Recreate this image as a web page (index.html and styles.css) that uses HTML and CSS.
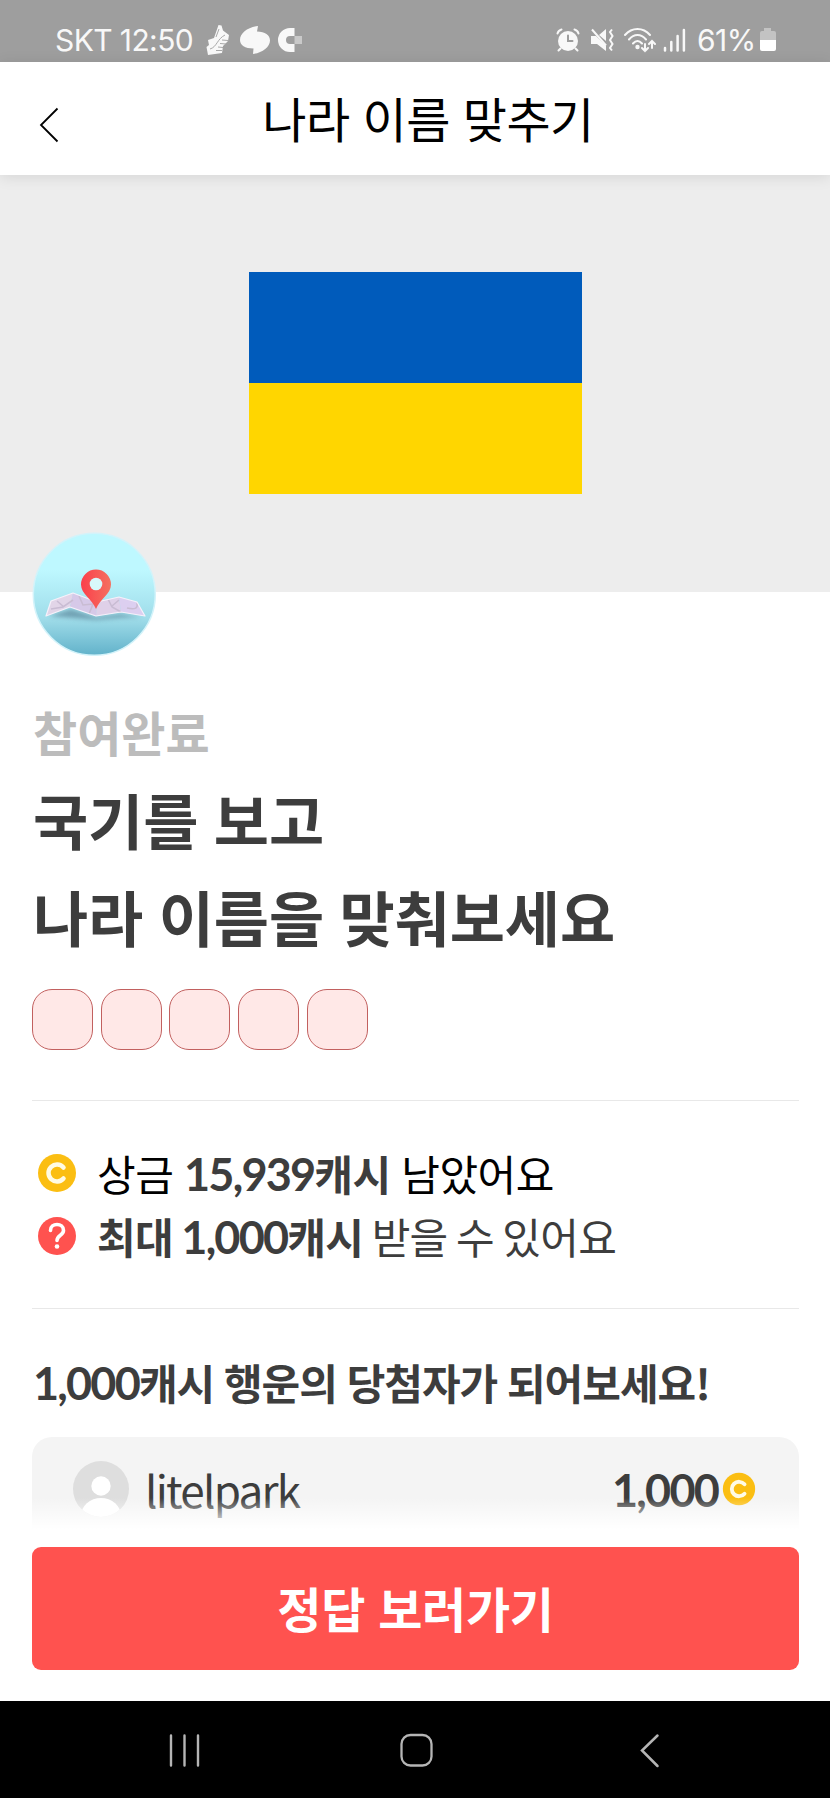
FILE: index.html
```html
<!DOCTYPE html>
<html lang="ko">
<head>
<meta charset="utf-8">
<title>나라 이름 맞추기</title>
<link rel="stylesheet" href="styles.css">
</head>
<body>
<div class="status">
  <div class="status-left">
    <span class="clock">SKT 12:50</span>
    <svg class="shoe" width="26" height="32" viewBox="0 0 26 32"><path d="M13.500 1l3 .5 1.500 5 6 4.500-1 6-5 5-1 7-14 2-1.500-8 2.500-2-1-5 6-2z" fill="#f8f8f8"/><path d="M5 25c7-2 7-10 15-14M11 26.500h6M13 23l5 .5M15 19.500l6 .5M17 16l6 .5M14 5l-3 8" fill="none" stroke="#a8a8a8" stroke-width="1"/></svg>
    <svg class="swirl" width="32" height="30" viewBox="0 0 32 30"><path d="M19 1l-1 5.500c8 0 13 3.500 13 9C31 22 23 28 14 29l.5-5.500C6 23.500 1 20 1 15 1 8 9 2 19 1z" fill="#f8f8f8"/></svg>
    <svg width="26" height="24" viewBox="0 0 26 24"><path d="M16.500 0v8H12a4 4 0 0 0 0 8h4.500v8H12A12 12 0 0 1 12 0z" fill="#f8f8f8"/><path d="M16.500 8H24v8h-7.500z" fill="#c9c9c9"/></svg>
  </div>
  <div class="status-right">
    <svg width="24" height="24" viewBox="0 0 24 24" fill="none" stroke="#f8f8f8" stroke-linecap="round"><circle cx="12" cy="13" r="10" fill="#f8f8f8" stroke="none"/><path d="M1.500 5.500C2 3.500 3.500 2 5.500 1.500M22.500 5.500c-.5-2-2-3.500-4-4M4.500 20.500l-2 2M19.500 20.500l2 2" stroke-width="2"/><path d="M12 7.500V13h4.500" stroke="#9d9d9d" stroke-width="2"/></svg>
    <svg class="mute" width="24" height="24" viewBox="0 0 24 24"><path d="M1 8h5l10 10v5L7 16H1zM9 7l7-6v12z" fill="#f8f8f8"/><path d="M2 1.500l14 16M22 1.500l-2 2.500 2.500 4-2.500 4 2.500 4-2.500 4 2 2.500" fill="none" stroke="#f8f8f8" stroke-width="2"/></svg>
    <svg class="wifi" width="33" height="26" viewBox="0 0 33 26" fill="none" stroke="#f8f8f8" stroke-width="2" stroke-linecap="round"><path d="M2 8c7-8 18-8 25 0M6 12.500c5-6 12-6 17 0M10 16.500c3-3.500 6-3.500 9 0M22 17v7m-3-3l3 3 3-3M29 21v-7m-3 3l3-3 3 3"/><circle cx="14.500" cy="20" r="1.200" fill="#f8f8f8"/></svg>
    <svg class="signal" width="24" height="24" viewBox="0 0 24 24" stroke="#f8f8f8" stroke-width="2.500" stroke-linecap="round"><path d="M2 20v2.500M8.300 14v8.500M14.600 8v14.500M20.900 2v20.500"/></svg>
    <span class="percent">61%</span>
    <svg width="18" height="24" viewBox="0 0 18 24"><path d="M5 0h7v3h3q2 0 2 2v7H1V5q0-2 2-2h2z" fill="#c3c3c3"/><path d="M1 12h16v9q0 2-2 2H3q-2 0-2-2z" fill="#fff"/></svg>
  </div>
</div>
<header class="header">
  <svg class="back" width="20" height="36" viewBox="0 0 20 36"><path d="M18.500 1.500L2 18l16.500 16.500" fill="none" stroke="#000" stroke-width="1.800"/></svg>
  <h1 class="header-title">나라 이름 맞추기</h1>
</header>
<section class="hero">
  <div class="flag"><div class="flag-blue"></div><div class="flag-yellow"></div></div>
  <svg class="badge" width="126" height="126" viewBox="0 0 126 126">
    <defs>
      <linearGradient id="sky" x1="0" y1="0" x2="0" y2="1"><stop offset=".3" stop-color="#bef8ff"/><stop offset=".7" stop-color="#9fdce9"/><stop offset="1" stop-color="#62b2ca"/></linearGradient>
      <linearGradient id="pin" x1="0" y1="0" x2="1" y2="0"><stop offset="0" stop-color="#fb3f4b"/><stop offset="1" stop-color="#f47160"/></linearGradient>
      <filter id="soft" x="-20%" y="-50%" width="140%" height="200%"><feGaussianBlur stdDeviation="2"/></filter>
    </defs>
    <circle cx="63.300" cy="64.300" r="61" fill="url(#sky)" stroke="#d3f3fa" stroke-width="1.500"/>
    <path d="M18 86l22-7 25 8 24-3 22 3-22 1-24 2z" fill="#527c91" opacity=".6" filter="url(#soft)"/>
    <path d="M20 71l22-8-3 14-24 9z" fill="#e2d5e8"/><path d="M42 63l24 9-1 14-26-9z" fill="#d6c9e8"/><path d="M66 72l22-5 2 15-25 4z" fill="#dfd0e8"/><path d="M88 67l18 5 8 14-24-4z" fill="#dccff0"/>
    <path d="M20 79l12-2 10-7M33 77l-7-6M48 66l4 9 10-1M58 84l4-10M77 69l4 8 9 5M81 76l7-6M96 78c9 2 11 0 10-5" fill="none" stroke="#c9bcd3" stroke-width="1.600"/>
    <path d="M20 71l22-8 24 9 22-5 18 5 8 14-24-4-25 4-26-9-24 9z" fill="none" stroke="#f6f1fa" stroke-width="1.200" stroke-linejoin="round"/>
    <path d="M65 79C61 69 50 64 50 54.500a15 15 0 0 1 30 0C80 64 69 69 65 79z" fill="url(#pin)"/><circle cx="65" cy="54" r="6.300" fill="#d8f8fb"/>
  </svg>
</section>
<main class="content">
  <p class="state">참여완료</p>
  <h2 class="question">국기를 보고<br>나라 이름을 맞춰보세요</h2>
  <div class="slots"><i class="slot"></i><i class="slot"></i><i class="slot"></i><i class="slot"></i><i class="slot"></i></div>
  <div class="rewards">
    <div class="reward">
      <svg width="40" height="40" viewBox="0 0 40 40"><circle cx="20" cy="20" r="19" fill="#fbbe12"/><path d="M26.500 14.500a8.500 8.500 0 1 0 0 11" fill="none" stroke="#fffbe5" stroke-width="4.500" stroke-linecap="round"/></svg>
      <p class="reward-text black">상금 <b><span class="num">15,939</span>캐시</b> 남았어요</p>
    </div>
    <div class="reward">
      <svg width="40" height="40" viewBox="0 0 40 40"><circle cx="20" cy="20" r="19" fill="#ff524f"/><path d="M13.500 14.500c0-8 13-8 13 0 0 5-6.500 4.500-6.500 10" fill="none" stroke="#fff" stroke-width="3.600" stroke-linecap="round"/><circle cx="20" cy="30.500" r="2.300" fill="#fff"/></svg>
      <p class="reward-text second"><b>최대 <span class="num">1,000</span>캐시</b> 받을 수 있어요</p>
    </div>
  </div>
  <h3 class="winners-title"><span class="num">1,000</span>캐시 행운의 당첨자가 되어보세요!</h3>
  <div class="winner">
    <svg width="56" height="56" viewBox="0 0 56 56"><defs><clipPath id="round"><circle cx="28" cy="28" r="28"/></clipPath></defs><g clip-path="url(#round)"><path d="M0 0h56v56H0z" fill="#dedede"/><circle cx="28" cy="25" r="9.700" fill="#fff"/><ellipse cx="28" cy="55" rx="20" ry="18" fill="#fff"/></g></svg>
    <span class="winner-name">litelpark</span>
    <span class="winner-cash num">1,000</span>
    <svg class="coin" width="34" height="34" viewBox="0 0 40 40"><circle cx="20" cy="20" r="19" fill="#fbbe12"/><path d="M26.500 14.500a8.500 8.500 0 1 0 0 11" fill="none" stroke="#fffbe5" stroke-width="4.500" stroke-linecap="round"/></svg>
    <div class="fade"></div>
  </div>
  <div class="button">정답 보러가기</div>
</main>
<nav class="nav">
  <svg width="32" height="36" viewBox="0 0 32 36"><path d="M2 2.500v30M15.500 2.500v30M29 2.500v30" stroke="#b5b5b5" stroke-width="2.400" stroke-linecap="round"/></svg>
  <svg class="home" width="34" height="36" viewBox="0 0 34 36"><rect x="1.500" y="2" width="30" height="30.500" rx="9" fill="none" stroke="#b5b5b5" stroke-width="2.300"/></svg>
  <svg width="22" height="36" viewBox="0 0 22 36"><path d="M18.500 2.500L3 17.500l15.500 15.500" fill="none" stroke="#b5b5b5" stroke-width="2.500" stroke-linecap="round"/></svg>
</nav>
</body>
</html>
```

FILE: styles.css
```css
* { box-sizing: border-box; margin: 0; padding: 0; }
body { width: 830px; height: 1798px; overflow: hidden; background: #fff; color: #3d3d3d; font-family: "Noto Sans CJK KR", sans-serif; display: flex; flex-direction: column; }
svg { display: block; flex: none; }
.num { font-family: Lato, sans-serif; font-size: 45px; letter-spacing: -1.800px; line-height: 1; font-weight: 700; }
.status { height: 62px; background: #9e9e9e; color: #f8f8f8; display: flex; justify-content: space-between; padding: 18px 53px 0 55px; font-family: Inter, sans-serif; font-size: 30px; letter-spacing: -.6px; line-height: 44px; white-space: nowrap; }
.status-left, .status-right { display: flex; align-items: center; height: 44px; }
.clock { width: 138px; margin-right: 12px; }
.shoe { margin-right: 8px; }
.swirl { margin-right: 7px; }
.mute { margin-left: 10px; }
.wifi { margin-left: 9px; }
.signal { margin-left: 7px; }
.percent { margin-left: 10px; width: 62px; letter-spacing: -.5px; }
.header { position: relative; z-index: 1; height: 113px; background: #fff; display: flex; align-items: center; padding-left: 39px; box-shadow: 0 2px 14px rgba(0,0,0,.1); }
.back { margin-top: 12px; }
.header-title { flex: 1; padding: 0 33px 4px 0; text-align: center; font-size: 48px; letter-spacing: -.5px; line-height: 80px; font-weight: 400; color: #000; }
.hero { position: relative; height: 417px; background: #ededed; display: flex; justify-content: center; padding: 97px 0 0 1px; }
.flag { width: 333px; height: 222px; }
.flag-blue { height: 111px; background: #005bbb; }
.flag-yellow { height: 111px; background: #ffd600; }
.badge { position: absolute; left: 31px; bottom: -64px; }
.content { flex: 1; padding: 0 31px 0 32px; display: flex; flex-direction: column; }
.state { margin-top: 106px; padding-left: 1px; font-size: 48px; line-height: 66px; font-weight: 700; color: #bcbcbc; }
.question { margin-top: 6px; padding-left: 1px; font-size: 60px; letter-spacing: -.1px; word-spacing: -1.200px; line-height: 97px; font-weight: 700; }
.slots { display: flex; gap: 7.700px; margin-top: 25px; }
.slot { width: 61px; height: 61px; border: 1.800px solid #c2605f; border-radius: 20px; background: #ffe8e7; }
.rewards { margin-top: 50px; height: 209px; border-top: 1.500px solid #e8e8e8; border-bottom: 1.500px solid #e8e8e8; padding-top: 40px; }
.reward { display: flex; align-items: center; height: 63px; padding-left: 4.500px; }
.reward-text { margin-left: 20.500px; font-size: 42px; letter-spacing: -.5px; word-spacing: -.5px; line-height: 63px; white-space: nowrap; }
.second { letter-spacing: -.7px; word-spacing: -2.600px; }
.black { color: #000; }
.black b { color: #3d3d3d; }
.winners-title { margin-top: 42px; padding-left: 1px; font-size: 42px; letter-spacing: -1px; word-spacing: -1px; line-height: 62px; white-space: nowrap; font-weight: 700; }
.winner { position: relative; margin-top: 24px; height: 92px; border-radius: 20px 20px 0 0; background: #f4f4f4; display: flex; align-items: center; padding: 11px 43px 0 41px; }
.winner-name { margin-left: 16px; font-size: 44px; letter-spacing: -1.750px; line-height: 60px; }
.winner-cash { margin-left: auto; padding-top: 4px; }
.coin { margin-left: 4px; }
.fade { position: absolute; left: 0; right: 0; bottom: 0; height: 31px; background: linear-gradient(rgba(255,255,255,0), #fff); }
.button { margin-top: 18px; height: 123px; border-radius: 9px; background: #ff524f; color: #fff; font-size: 48px; letter-spacing: -.3px; font-weight: 700; line-height: 121px; text-align: center; }
.nav { height: 97px; background: #000; display: flex; align-items: center; justify-content: space-between; padding: 2px 169px 0; }
.home { margin-right: 7px; }
```
